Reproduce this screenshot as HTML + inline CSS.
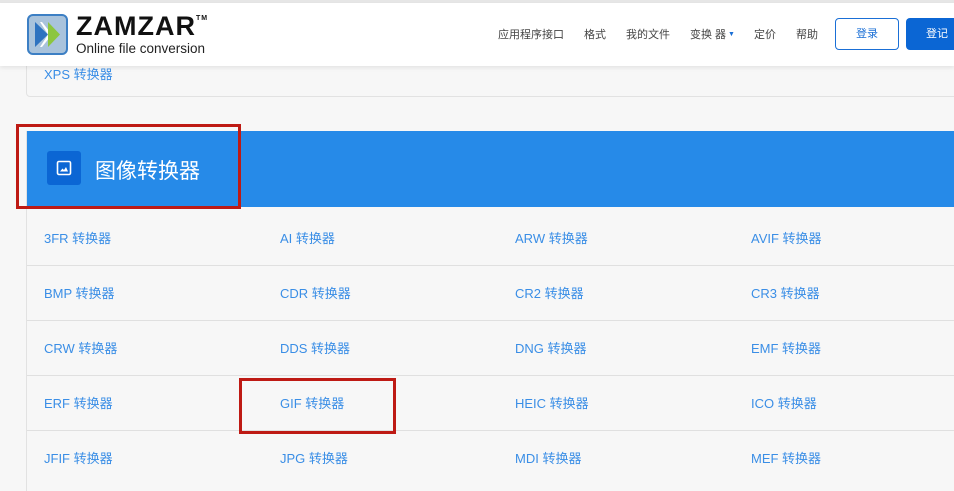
<!DOCTYPE html>
<html><head><meta charset="utf-8">
<style>
*{margin:0;padding:0;box-sizing:border-box}
body{width:954px;height:475px;overflow:hidden;background:#f7f7f7;font-family:"Liberation Sans","Noto Sans CJK SC",sans-serif;position:relative}
.top{position:absolute;left:0;top:0;width:954px;height:3px;background:#e6e6e6}
.hdr{position:absolute;left:0;top:3px;width:954px;height:63px;background:#fff;box-shadow:0 2px 4px rgba(0,0,0,.08);z-index:5}
.nav{position:absolute;top:23px;font-size:11px;color:#444}
.btn1{position:absolute;left:835px;top:15px;width:64px;height:32px;border:1px solid #1a6fd6;border-radius:4px;color:#1a6fd6;font-size:11px;text-align:center;line-height:30px}
.btn2{position:absolute;left:906px;top:15px;width:70px;height:32px;background:#0b66d4;border-radius:4px;color:#fff;font-size:11px;padding-left:20px;line-height:32px}
.xps{position:absolute;left:26px;top:50px;width:940px;height:47px;border:1px solid #e2e2e2;border-radius:4px;background:#f7f7f7}
.xps span{position:absolute;left:17px;top:13px;font-size:13px;color:#3a8ee6}
.card{position:absolute;left:26px;top:131px;width:940px;height:360px;border-left:1px solid #e2e2e2;background:#f7f7f7}
.bar{position:absolute;left:0;top:0;width:940px;height:76px;background:#268ae8}
.ico{position:absolute;left:20px;top:20px;width:34px;height:34px;background:#0b66d4;border-radius:3px}
.ttl{position:absolute;left:68px;top:24px;font-size:21px;color:#fff}
.line{position:absolute;left:0;width:940px;height:1px;background:#e0e0e0}
.c{position:absolute;font-size:13px;color:#3a8ee6}
.red{position:absolute;border:3px solid #be1a14;z-index:9}
</style></head><body>
<div class="top"></div>
<div class="xps"><span>XPS 转换器</span></div>
<div class="hdr">
<svg style="position:absolute;left:27px;top:11px" width="41" height="41" viewBox="0 0 41 41">
<rect x="1" y="1" width="39" height="39" rx="5" fill="#a9c3dc" stroke="#3c7fc4" stroke-width="2"/>
<polygon points="8,8 21,20.5 8,33" fill="#2e73c0"/>
<polygon points="15,8 25,20.5 15,33 13,33 21,20.5 13,8" fill="#fff"/>
<polygon points="21,8 33,20.5 21,33" fill="#8cc63f"/>
</svg>
<div style="position:absolute;left:76px;top:8px;font-size:27px;font-weight:bold;color:#111;letter-spacing:1px">ZAMZAR<sup style="font-size:7px;vertical-align:top;position:relative;top:4px">TM</sup></div>
<div style="position:absolute;left:76px;top:38px;font-size:13.5px;color:#222">Online file conversion</div>
<div class="nav" style="left:498px">应用程序接口</div>
<div class="nav" style="left:584px">格式</div>
<div class="nav" style="left:626px">我的文件</div>
<div class="nav" style="left:690px">变换 器<span style="font-size:7px;color:#1a6fd6;vertical-align:2px"> ▼</span></div>
<div class="nav" style="left:754px">定价</div>
<div class="nav" style="left:796px">帮助</div>
<div class="btn1">登录</div>
<div class="btn2">登记</div>
</div>
<div class="card">
<div class="bar">
<div class="ico"><svg width="34" height="34" viewBox="0 0 34 34"><rect x="10.5" y="10.5" width="13" height="13" rx="1.5" fill="none" stroke="#fff" stroke-width="1.6"/><polygon points="13,20.5 15.5,17.5 17,19 19,16 21,20.5" fill="#fff"/></svg></div>
<div class="ttl">图像转换器</div>
</div>
<div class="line" style="top:134px"></div>
<div class="line" style="top:189px"></div>
<div class="line" style="top:244px"></div>
<div class="line" style="top:299px"></div>
</div>
<div class="c" style="left:44px;top:228px">3FR 转换器</div>
<div class="c" style="left:280px;top:228px">AI 转换器</div>
<div class="c" style="left:515px;top:228px">ARW 转换器</div>
<div class="c" style="left:751px;top:228px">AVIF 转换器</div>
<div class="c" style="left:44px;top:283px">BMP 转换器</div>
<div class="c" style="left:280px;top:283px">CDR 转换器</div>
<div class="c" style="left:515px;top:283px">CR2 转换器</div>
<div class="c" style="left:751px;top:283px">CR3 转换器</div>
<div class="c" style="left:44px;top:338px">CRW 转换器</div>
<div class="c" style="left:280px;top:338px">DDS 转换器</div>
<div class="c" style="left:515px;top:338px">DNG 转换器</div>
<div class="c" style="left:751px;top:338px">EMF 转换器</div>
<div class="c" style="left:44px;top:393px">ERF 转换器</div>
<div class="c" style="left:280px;top:393px">GIF 转换器</div>
<div class="c" style="left:515px;top:393px">HEIC 转换器</div>
<div class="c" style="left:751px;top:393px">ICO 转换器</div>
<div class="c" style="left:44px;top:448px">JFIF 转换器</div>
<div class="c" style="left:280px;top:448px">JPG 转换器</div>
<div class="c" style="left:515px;top:448px">MDI 转换器</div>
<div class="c" style="left:751px;top:448px">MEF 转换器</div>
<div class="red" style="left:16px;top:124px;width:225px;height:85px"></div>
<div class="red" style="left:239px;top:378px;width:157px;height:56px"></div>
</body></html>
